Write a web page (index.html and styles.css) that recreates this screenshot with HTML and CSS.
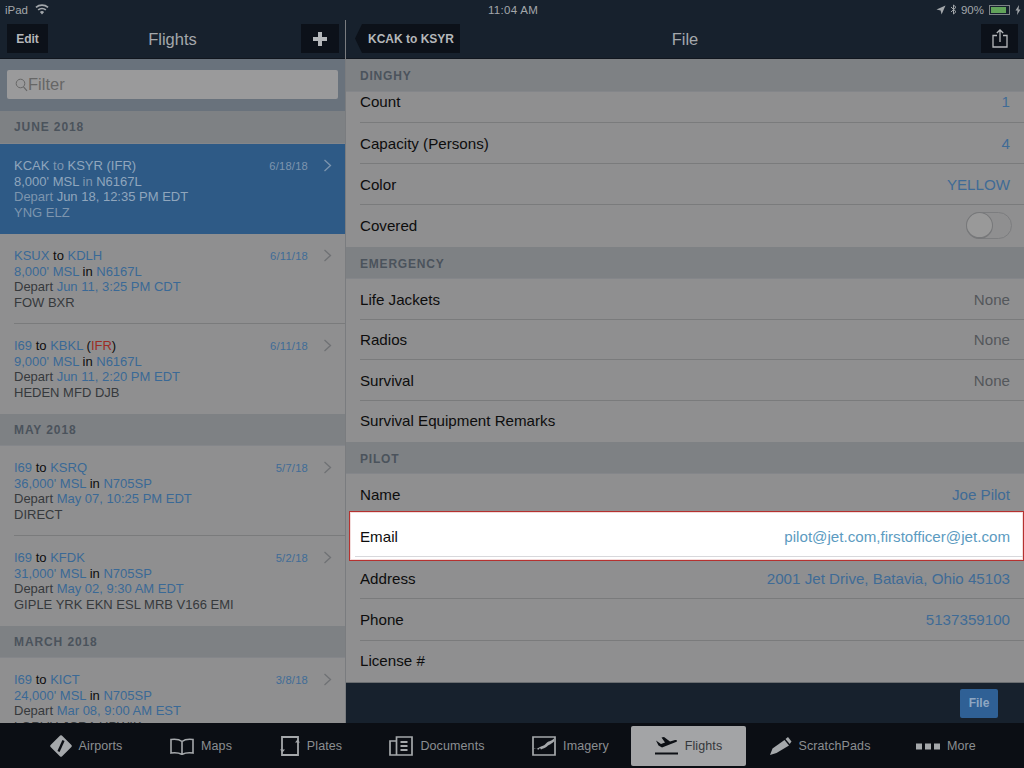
FILE: index.html
```html
<!DOCTYPE html>
<html>

  <head>
     <meta charset="utf-8">
     <title>Flights - File</title>
     <link rel="stylesheet" href="styles.css">
  </head>

  <body>
    <div class="app">

      <div class="status">
        <div class="status_left">
          <span>iPad</span>
          <svg class="wifi" width="14" height="11" viewBox="0 0 14 11"><path d="M7 10.5 4.9 8a3.2 3.2 0 0 1 4.2 0zM3.7 6.6 2.6 5.3a6.8 6.8 0 0 1 8.8 0l-1.1 1.3a5 5 0 0 0-6.6 0zM1.5 4 .4 2.7a10.2 10.2 0 0 1 13.2 0L12.5 4a8.5 8.5 0 0 0-11 0z" fill="#a3a7ab"/></svg>
        </div>
        <div class="status_time">11:04 AM</div>
        <div class="status_right">
          <svg width="10" height="10" viewBox="0 0 10 10"><path d="M9.5.5 5.6 9.5 4.6 5.4.5 4.4z" fill="#a3a7ab"/></svg>
          <svg width="7" height="11" viewBox="0 0 7 11"><path d="M1 3l5 4.7L3.5 10V1L6 3.3 1 8" fill="none" stroke="#a3a7ab" stroke-width="1"/></svg>
          <span>90%</span>
          <div class="battery"><div class="battery_fill"></div></div>
          <svg class="bolt" width="6" height="10" viewBox="0 0 6 10"><path d="M4 0 .5 5.6h2L2 10l3.500-5.600h-2z" fill="#a3a7ab"/></svg>
        </div>
      </div>

      <div class="main">

        <div class="left">
          <div class="nav">
            <div class="nav_btn btn_edit">Edit</div>
            <div class="nav_title">Flights</div>
            <div class="nav_btn btn_add">
              <svg width="16" height="16" viewBox="0 0 16 16"><path d="M6 1h4v5h5v4h-5v5H6v-5H1V6h5z" fill="#b4b7ba"/></svg>
            </div>
          </div>

          <div class="search">
            <div class="search_input">
              <svg width="13" height="14" viewBox="0 0 13 14"><circle cx="5.500" cy="5.500" r="4.300" fill="none" stroke="#666" stroke-width="1"/><path d="M8.500 8.800 12 12.800" stroke="#666" stroke-width="1.100"/></svg>
              <span>Filter</span>
            </div>
          </div>

          <div class="list">
            <div class="list_head">JUNE 2018</div>

            <div class="flight selected">
              <div class="flight_text">
                <div><b>KCAK</b> to <b>KSYR</b> <b>(IFR)</b></div>
                <div><b>8,000' MSL</b> in <b>N6167L</b></div>
                <div>Depart <b>Jun 18, 12:35 PM EDT</b></div>
                <div>YNG ELZ</div>
              </div>
              <div class="flight_date">6/18/18</div>
              <svg class="chev" width="9" height="13" viewBox="0 0 9 13"><path d="M1.500 1 7.500 6.500 1.500 12" fill="none" stroke="currentColor" stroke-width="1.300"/></svg>
            </div>

            <div class="flight">
              <div class="flight_text">
                <div><b>KSUX</b> <i>to</i> <b>KDLH</b></div>
                <div><b>8,000' MSL</b> <i>in</i> <b>N6167L</b></div>
                <div>Depart <b>Jun 11, 3:25 PM CDT</b></div>
                <div>FOW BXR</div>
              </div>
              <div class="flight_date">6/11/18</div>
              <svg class="chev" width="9" height="13" viewBox="0 0 9 13"><path d="M1.500 1 7.500 6.500 1.500 12" fill="none" stroke="currentColor" stroke-width="1.300"/></svg>
            </div>

            <div class="flight no_line">
              <div class="flight_text">
                <div><b>I69</b> <i>to</i> <b>KBKL</b> <i>(</i><em>IFR</em><i>)</i></div>
                <div><b>9,000' MSL</b> <i>in</i> <b>N6167L</b></div>
                <div>Depart <b>Jun 11, 2:20 PM EDT</b></div>
                <div>HEDEN MFD DJB</div>
              </div>
              <div class="flight_date">6/11/18</div>
              <svg class="chev" width="9" height="13" viewBox="0 0 9 13"><path d="M1.500 1 7.500 6.500 1.500 12" fill="none" stroke="currentColor" stroke-width="1.300"/></svg>
            </div>

            <div class="list_head">MAY 2018</div>

            <div class="flight">
              <div class="flight_text">
                <div><b>I69</b> <i>to</i> <b>KSRQ</b></div>
                <div><b>36,000' MSL</b> <i>in</i> <b>N705SP</b></div>
                <div>Depart <b>May 07, 10:25 PM EDT</b></div>
                <div>DIRECT</div>
              </div>
              <div class="flight_date">5/7/18</div>
              <svg class="chev" width="9" height="13" viewBox="0 0 9 13"><path d="M1.500 1 7.500 6.500 1.500 12" fill="none" stroke="currentColor" stroke-width="1.300"/></svg>
            </div>

            <div class="flight no_line">
              <div class="flight_text">
                <div><b>I69</b> <i>to</i> <b>KFDK</b></div>
                <div><b>31,000' MSL</b> <i>in</i> <b>N705SP</b></div>
                <div>Depart <b>May 02, 9:30 AM EDT</b></div>
                <div>GIPLE YRK EKN ESL MRB V166 EMI</div>
              </div>
              <div class="flight_date">5/2/18</div>
              <svg class="chev" width="9" height="13" viewBox="0 0 9 13"><path d="M1.500 1 7.500 6.500 1.500 12" fill="none" stroke="currentColor" stroke-width="1.300"/></svg>
            </div>

            <div class="list_head">MARCH 2018</div>

            <div class="flight">
              <div class="flight_text">
                <div><b>I69</b> <i>to</i> <b>KICT</b></div>
                <div><b>24,000' MSL</b> <i>in</i> <b>N705SP</b></div>
                <div>Depart <b>Mar 08, 9:00 AM EST</b></div>
                <div>LORVH JCRA UPWIK</div>
              </div>
              <div class="flight_date">3/8/18</div>
              <svg class="chev" width="9" height="13" viewBox="0 0 9 13"><path d="M1.500 1 7.500 6.500 1.500 12" fill="none" stroke="currentColor" stroke-width="1.300"/></svg>
            </div>
          </div>
        </div>

        <div class="right">
          <div class="nav">
            <div class="nav_btn btn_back">KCAK to KSYR</div>
            <div class="nav_title">File</div>
            <div class="nav_btn btn_share">
              <svg width="16" height="19" viewBox="0 0 16 19"><path d="M5 6.500H1v11.500h14V6.500h-4M8 13V1M4.800 4 8 1l3.200 3" fill="none" stroke="#b4b7ba" stroke-width="1.300"/></svg>
            </div>
          </div>

          <div class="form">
            <div class="form_head">DINGHY</div>
            <div class="form_row first"><span>Count</span><b>1</b></div>
            <div class="form_row"><span>Capacity (Persons)</span><b>4</b></div>
            <div class="form_row"><span>Color</span><b>YELLOW</b></div>
            <div class="form_row last">
              <span>Covered</span>
              <div class="toggle"><div class="toggle_knob"></div></div>
            </div>

            <div class="form_head">EMERGENCY</div>
            <div class="form_row tight"><span>Life Jackets</span><u>None</u></div>
            <div class="form_row tight"><span>Radios</span><u>None</u></div>
            <div class="form_row tight"><span>Survival</span><u>None</u></div>
            <div class="form_row tight last"><span>Survival Equipment Remarks</span></div>

            <div class="form_head">PILOT</div>
            <div class="form_row wide plain"><span>Name</span><b>Joe Pilot</b></div>
            <div class="form_row wide highlight"><span>Email</span><b>pilot@jet.com,firstofficer@jet.com</b></div>
            <div class="form_row wide"><span>Address</span><b>2001 Jet Drive, Batavia, Ohio 45103</b></div>
            <div class="form_row wide"><span>Phone</span><b>5137359100</b></div>
            <div class="form_row wide last"><span>License #</span></div>
          </div>

          <div class="footer">
            <div class="file_btn">File</div>
          </div>
        </div>

      </div>

      <div class="tabs">
        <div class="tab">
          <svg width="22" height="22" viewBox="0 0 22 22"><path d="M11 1.500 20.500 11 11 20.500 1.500 11z" fill="#a5a8ab" stroke="#a5a8ab" stroke-linejoin="round" stroke-width="2.500"/><path d="M13.500 5.500 8.500 16.500" stroke="#0b0e14" stroke-width="2.400"/></svg>
          <span>Airports</span>
        </div>
        <div class="tab">
          <svg width="24" height="17" viewBox="0 0 24 17"><path d="M12 3.500C9.500 1.500 5 1 1 1.500v13.500c4-.5 8.500 0 11 1.500 2.500-1.500 7-2 11-1.500V1.500c-4-.5-8.500 0-11 2zM12 3.500v13" fill="none" stroke="#a5a8ab" stroke-width="1.600"/></svg>
          <span>Maps</span>
        </div>
        <div class="tab">
          <svg width="20" height="20" viewBox="0 0 20 20"><path d="M2 1h16v18H2z" fill="none" stroke="#a5a8ab" stroke-width="1.800"/><path d="M15 6.500h5L17.500 3.500zM0 13.500h5L2.500 16.500z" fill="#a5a8ab"/></svg>
          <span>Plates</span>
        </div>
        <div class="tab">
          <svg width="24" height="20" viewBox="0 0 24 20"><path d="M7.500 1h15.500v18H7.500zM1 5h6.500v14H1z" fill="none" stroke="#a5a8ab" stroke-width="1.700"/><path d="M11.500 6h7M11.500 10h7M11.500 14h7" fill="none" stroke="#a5a8ab" stroke-width="1.800"/></svg>
          <span>Documents</span>
        </div>
        <div class="tab">
          <svg width="24" height="20" viewBox="0 0 24 20"><path d="M1 1h22v18H1z" fill="none" stroke="#a5a8ab" stroke-width="1.700"/><path d="M2 12.500c3-.5 4 0 6-1.500s4-1 6-3.500 5-2 8-5v3c-3 3-5 3-7 5s-4 1.500-6 3l-1-1.500-2 2-1-2-3 1z" fill="#a5a8ab"/></svg>
          <span>Imagery</span>
        </div>
        <div class="tab active">
          <svg width="23" height="18" viewBox="0 0 23 18"><path d="M1 3.500 6 7l4-1.500L6.500 0.500 9 0l6 4.500 5-1.500c2-.5 3 1 1 2L7 10.500 3.500 8.500z" fill="#0d1015"/><path d="M0 16.500h23" stroke="#0d1015" stroke-width="2"/></svg>
          <span>Flights</span>
        </div>
        <div class="tab">
          <svg width="22" height="18" viewBox="0 0 22 18"><path d="M0 18l2.500-6.500L14.500 3l4.500 5.500L6.500 16z" fill="#a5a8ab"/><path d="M15.500 2 18 0l3.500 4.500-1.800 2.500z" fill="#a5a8ab"/></svg>
          <span>ScratchPads</span>
        </div>
        <div class="tab">
          <svg width="24" height="7" viewBox="0 0 24 7"><path d="M0 .5h6v6H0zM9 .5h6v6H9zM18 .5h6v6h-6z" fill="#a5a8ab"/></svg>
          <span>More</span>
        </div>
      </div>

    </div>
  </body>

</html>
```

FILE: styles.css
```css
*{
    margin:0;
    padding:0;
    box-sizing:border-box;
}
body{
    background:#0b0e14;
    font-family:"Liberation Sans", Arial, sans-serif;
}
.app{
    width:1024px;
    height:768px;
    display:flex;
    flex-direction:column;
    overflow:hidden;
}

/* status bar */
.status{
    height:20px;
    background:#17212d;
    color:#a3a7ab;
    font-size:11.500px;
    display:grid;
    grid-template-columns:1fr auto 1fr;
    align-items:center;
    padding:0 3px 1px 5px;
}
.status_left{
    display:flex;
    align-items:center;
    gap:7px;
}
.status_time{
    letter-spacing:.3px;
}
.status_right{
    display:flex;
    align-items:center;
    justify-content:flex-end;
    gap:4px;
}
.battery{
    width:21px;
    height:10px;
    border:1px solid #7d8286;
    margin-left:1px;
    padding:1px;
}
.battery_fill{
    width:90%;
    height:100%;
    background:#62a35a;
}
.bolt{
    margin-left:1px;
}

/* panels */
.main{
    flex:1;
    display:flex;
    min-height:0;
}
.left{
    width:346px;
    display:flex;
    flex-direction:column;
    border-right:1px solid #7a7c7f;
}
.right{
    flex:1;
    display:flex;
    flex-direction:column;
}
.nav{
    height:39px;
    flex:none;
    background:#17212d;
    display:flex;
    align-items:flex-start;
    justify-content:space-between;
    position:relative;
    padding:4px 6px 0 7px;
    border-bottom:1px solid #11161e;
}
.nav_title{
    position:absolute;
    left:0;
    right:0;
    top:10px;
    text-align:center;
    font-size:16.500px;
    color:#a4a8ac;
}
.nav_btn{
    height:29px;
    background:#0c1119;
    color:#b4b7ba;
    font-size:12px;
    font-weight:bold;
    display:flex;
    align-items:center;
    justify-content:center;
    position:relative;
    z-index:1;
}
.btn_edit{
    width:41px;
}
.btn_add{
    width:38px;
}
.btn_back{
    width:105px;
    margin-left:2px;
    padding-left:7px;
    clip-path:polygon(7px 0, 100% 0, 100% 100%, 7px 100%, 0 50%);
}
.btn_share{
    width:37px;
}

/* left side */
.search{
    height:52px;
    flex:none;
    background:#69727c;
    padding:11px 7px 12px;
}
.search_input{
    height:29px;
    background:#9a9a9b;
    border-radius:2px;
    display:flex;
    align-items:center;
    padding-left:8px;
    color:#666;
    font-size:16.500px;
}
.list{
    flex:1;
    overflow:hidden;
    background:#8f8f90;
}
.list_head{
    height:32px;
    background:#7e8184;
    color:#4b535c;
    font-size:12px;
    font-weight:bold;
    letter-spacing:.9px;
    padding:9px 14px 0;
    border-bottom:1px solid #84868a;
}
.list_head:first-child{
    height:33px;
}
.flight{
    height:90px;
    display:flex;
    padding:14.400px 14px 0;
    color:#36393c;
    font-size:13px;
    line-height:15.400px;
    position:relative;
}
.flight:after{
    content:"";
    position:absolute;
    left:14px;
    right:0;
    bottom:0;
    height:1px;
    background:#7a7b7c;
}
.no_line:after{
    display:none;
}
.flight_text{
    flex:1;
    white-space:nowrap;
}
.flight b{
    font-weight:normal;
    color:#3a6996;
}
.flight i{
    font-style:normal;
    color:#0d0d0d;
}
.flight em{
    font-style:normal;
    color:#9c2d24;
}
.flight_date{
    font-size:11.200px;
    color:#3f6c97;
    margin-top:1px;
    margin-right:15px;
    letter-spacing:.2px;
}
.chev{
    color:#6f7174;
    margin-right:-1px;
    margin-top:1px;
}
.selected{
    background:#2e5a86;
    color:#7d95ae;
}
.selected b{
    color:#90a6bd;
}
.selected .flight_date{
    color:#7d95ae;
}
.selected .chev{
    color:#7d95ae;
}
.selected:after{
    display:none;
}

/* right side */
.form{
    flex:1;
    background:#8f8f90;
    overflow:hidden;
}
.form_head{
    height:32px;
    background:#7e8184;
    color:#4b535c;
    font-size:12px;
    font-weight:bold;
    letter-spacing:.8px;
    padding:10px 14px 0;
    border-bottom:1px solid #84868a;
}
.form_head:first-child{
    height:33px;
}
.form_row{
    height:41px;
    display:flex;
    align-items:center;
    justify-content:space-between;
    padding:0 14px;
    font-size:15.150px;
    color:#0d0d0d;
    position:relative;
}
.form_row:after{
    content:"";
    position:absolute;
    left:14px;
    right:0;
    bottom:0;
    height:1px;
    background:#7a7b7c;
}
.form_row.first{
    height:31px;
    padding-bottom:12px;
}
.form_row.last{
    height:42px;
    padding-bottom:1px;
}
.form_row.tight{
    height:40.500px;
}
.form_row.tight.last{
    height:41.500px;
}
.form_row.wide{
    height:41.400px;
}
.form_row.last:after,
.form_row.plain:after{
    display:none;
}
.form_row b{
    font-weight:normal;
    color:#3f6b96;
}
.form_row u{
    text-decoration:none;
    color:#54575b;
}
.form_row.highlight{
    height:49.400px;
    margin:-4px 0 -3px 3px;
    background:#fff;
    border:1px solid #b5312f;
    box-shadow:inset 0 0 0 1px #f3dcdc;
    padding:0 13px 0 10px;
    z-index:1;
}
.form_row.highlight b{
    color:#5c9bc1;
}
.form_row.highlight:after{
    left:5px;
    right:0;
    bottom:3px;
    background:#d8d8dc;
}
.toggle{
    width:46px;
    height:27px;
    margin-right:-2px;
    border:1px solid #7c7d7f;
    border-radius:14px;
    position:relative;
}
.toggle_knob{
    width:27px;
    height:27px;
    margin:-1px;
    background:#999;
    border:1px solid #77787a;
    border-bottom-width:2px;
    border-radius:50%;
}
.footer{
    height:41px;
    flex:none;
    background:#17212d;
    display:flex;
    justify-content:flex-end;
    align-items:center;
    padding:0 26px 0 0;
    border-top:1px solid #6a6d70;
}
.file_btn{
    width:38px;
    height:29px;
    background:#2f6095;
    color:#8fa7c2;
    border-radius:2px;
    font-size:12px;
    font-weight:bold;
    display:flex;
    align-items:center;
    justify-content:center;
}

/* tab bar */
.tabs{
    height:45px;
    flex:none;
    background:#0b0e14;
    display:grid;
    grid-template-columns:116px 114px 106px 146px 121px 115px 148px 104px;
    padding:3px 0 2px 28px;
    color:#8b8e92;
    font-size:12.500px;
    letter-spacing:.1px;
}
.tab{
    display:flex;
    align-items:center;
    justify-content:center;
    gap:7px;
}
.active{
    background:#a3a4a6;
    border-radius:2px;
    color:#34373b;
}
```
